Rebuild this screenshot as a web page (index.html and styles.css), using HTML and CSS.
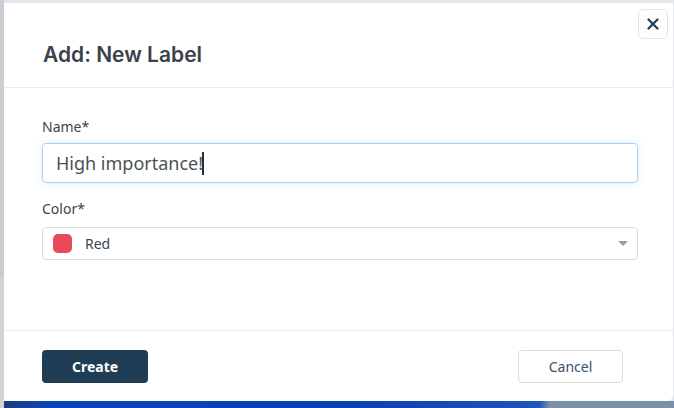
FILE: index.html
```html
<!DOCTYPE html>
<html lang="en">
<head>
<meta charset="utf-8">
<title>Add: New Label</title>
<link rel="stylesheet" href="styles.css">
</head>
<body>
<div class="screen">
  <div class="modal">
    <div class="modal-header">
      <h2 class="modal-title">Add: New Label</h2>
      <button class="close-btn" aria-label="Close">
        <svg width="12" height="12" viewBox="0 0 12 12"><path d="M1.5 1.5L10.5 10.5M10.5 1.5L1.5 10.5" stroke="#1f3d55" stroke-width="2.2" stroke-linecap="round"/></svg>
      </button>
    </div>
    <div class="modal-body">
      <label class="field-label">Name*</label>
      <div class="text-input">High importance!<span class="caret-line"></span></div>
      <label class="field-label color-label">Color*</label>
      <div class="select">
        <span class="swatch"></span>
        <span class="select-value">Red</span>
        <span class="select-arrow"></span>
      </div>
    </div>
    <div class="modal-footer">
      <button class="btn btn-primary">Create</button>
      <button class="btn btn-secondary">Cancel</button>
    </div>
  </div>
</div>
</body>
</html>
```
FILE: styles.css
```css
* { box-sizing: border-box; }
html, body { margin: 0; padding: 0; }
body {
  width: 674px;
  height: 408px;
  overflow: hidden;
  font-family: "Noto Sans", "Open Sans", sans-serif;
  background:
    linear-gradient(to right, #c9ced3 0, #c9ced3 4px, transparent 4px) 0 0 / 100% 278px no-repeat,
    linear-gradient(to right, #d3d3d3 0, #d3d3d3 4px, transparent 4px) 0 278px / 100% 130px no-repeat,
    linear-gradient(100deg, #183c78 0, #0b46b8 8%, #0a3fb0 50%, #1f55b8 80%, #7b8fab 81.5%, #7b8fab 100%) 0 401px / 100% 7px no-repeat,
    #e3e6ee;
}
.screen {
  padding: 3px 1px 7px 4px;
  height: 408px;
}
.modal {
  position: relative;
  background: #fff;
  height: 398px;
  border-radius: 0 0 6px 0;
  display: flex;
  flex-direction: column;
}
.modal-header {
  height: 85px;
  padding: 39px 39px 20px;
  border-bottom: 1px solid #ebebeb;
}
.modal-title {
  margin: 0;
  font-family: Inter, "Liberation Sans", sans-serif;
  font-weight: 600;
  font-size: 21px;
  line-height: 25px;
  color: #3b4249;
}
.close-btn {
  position: absolute;
  top: 6px;
  right: 5px;
  width: 30px;
  height: 30px;
  padding: 0;
  border: 1px solid #e2e2e2;
  border-radius: 5px;
  background: #fff;
  display: flex;
  align-items: center;
  justify-content: center;
}
.modal-body {
  flex: 1;
  padding: 29px 35px 0 38px;
  border-bottom: 1px solid #ebebeb;
}
.field-label {
  display: block;
  font-size: 14px;
  line-height: 20px;
  color: #3d444b;
  margin-bottom: 6px;
}
.color-label { margin-top: 16px; margin-bottom: 8px; }
.text-input {
  height: 40px;
  border: 1px solid #a6d0f4;
  border-radius: 4px;
  box-shadow: 0 0 6px rgba(120, 170, 220, 0.25);
  padding: 0 13px;
  display: flex;
  align-items: center;
  font-size: 18px;
  color: #4a5158;
}
.caret-line {
  display: inline-block;
  width: 2px;
  height: 23px;
  background: #2a3036;
  margin-left: -1px;
}
.select {
  height: 33px;
  border: 1px solid #dcdcdc;
  border-radius: 4px;
  display: flex;
  align-items: center;
  padding: 0 10px;
}
.swatch {
  width: 19px;
  height: 19px;
  border-radius: 5px;
  background: #e84a58;
}
.select-value {
  flex: 1;
  margin-left: 13px;
  font-size: 14px;
  color: #3d444b;
}
.select-arrow {
  width: 0;
  height: 0;
  border-left: 5px solid transparent;
  border-right: 5px solid transparent;
  border-top: 5px solid #9a9ea3;
  margin-right: -1px;
}
.modal-footer {
  height: 70px;
  padding: 19px 50px 0 38px;
  display: flex;
  align-items: flex-start;
  justify-content: space-between;
}
.btn {
  height: 33px;
  border-radius: 4px;
  font-family: "Noto Sans", "Open Sans", sans-serif;
  font-size: 14px;
  padding: 0;
}
.btn-primary {
  width: 106px;
  background: #1f3e56;
  border: none;
  color: #fff;
  font-weight: 700;
}
.btn-secondary {
  width: 105px;
  background: #fff;
  border: 1px solid #dcdcdc;
  color: #3b5068;
}
```
